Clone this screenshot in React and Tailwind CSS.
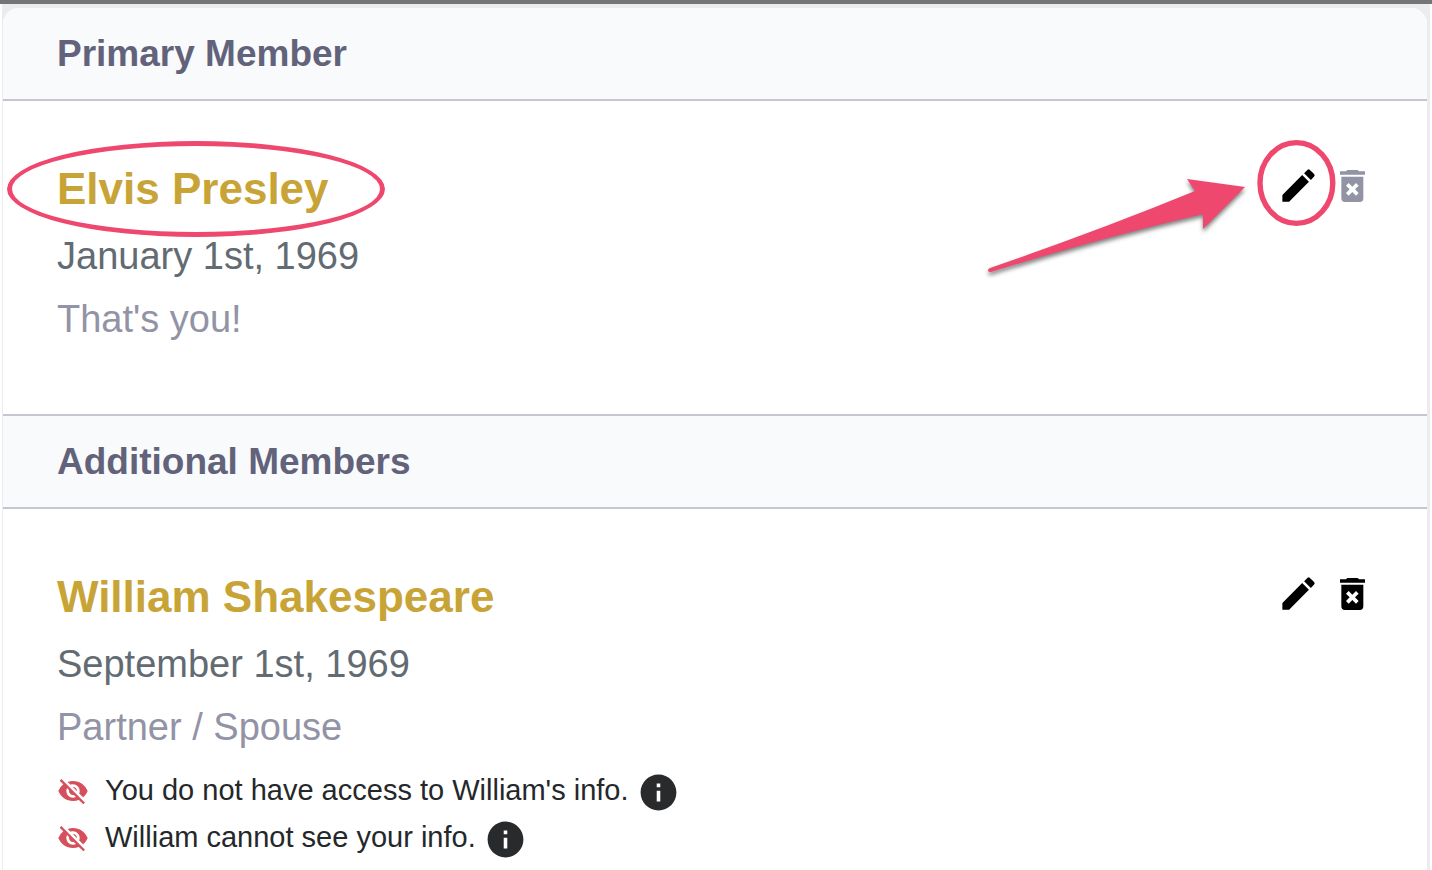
import { MdEdit, MdInfo, MdVisibilityOff } from 'react-icons/md';

const primary = {
  name: 'Elvis Presley',
  birthday: 'January 1st, 1969',
  relation: "That's you!",
};

const additional = {
  name: 'William Shakespeare',
  birthday: 'September 1st, 1969',
  relation: 'Partner / Spouse',
  notes: ["You do not have access to William's info.", 'William cannot see your info.'],
};

function TrashIcon() {
  return (
    <svg viewBox="0 -2 75 99" className="h-[33px] w-[25px]" fill="currentColor" aria-hidden="true">
      <path d="M0 5H18L22 1H53L57 5H75V15H0Z" />
      <path
        fillRule="evenodd"
        d="M4 21H70V86Q70 97 59 97H15Q4 97 4 86ZM26 40L18 48L29 59L18 70L26 78L37 67L48 78L56 70L45 59L56 48L48 40L37 51Z"
      />
    </svg>
  );
}

// Circle and arrow that point at the edit button
function Pointer() {
  return (
    <svg
      viewBox="0 0 355 110"
      className="pointer-events-none absolute -top-5 right-[25px] h-[110px] w-[355px] overflow-visible"
      fill="#ef486f"
      aria-hidden="true"
    >
      <ellipse cx="311.4" cy="48" rx="36.4" ry="40.4" fill="none" stroke="#ef486f" strokeWidth="5.4" />
      <path
        className="drop-shadow-[0px_3px_2px_rgba(0,0,0,0.5)]"
        d="M5 133Q115 95 210 56L202 44L260 52L218 94V79Q115 103 6 137Q3 137 3 135Q3 134 5 133Z"
      />
    </svg>
  );
}

function SectionHeader({ title, className }) {
  return (
    <h2
      className={`border-[#c5c6d2] bg-[#f9fafc] px-[54px] text-[37px] leading-[91px] font-bold text-[#62637a] ${className}`}
    >
      {title}
    </h2>
  );
}

function Member({ member, highlighted, className, children }) {
  return (
    <div className={`flex items-start justify-between pt-[54px] pr-[62px] pl-[54px] ${className}`}>
      <div>
        <div className="relative mb-[2px] w-fit">
          <h3 className="text-[44px] leading-[68px] font-bold text-[#c8a437]">{member.name}</h3>
          {highlighted && (
            <div className="pointer-events-none absolute -top-[14px] -left-[50px] h-[96px] w-[378px] rounded-[50%] border-[5px] border-[#ef486f]" />
          )}
        </div>
        <p className="text-[38px] leading-[63px] text-[#636b72]">{member.birthday}</p>
        <p className="text-[38px] leading-[63px] text-[#9293a5]">{member.relation}</p>
        {children}
      </div>

      <div className="relative flex h-[61px] items-center gap-5">
        <button type="button" aria-label={`Edit ${member.name}`} className="text-black">
          <MdEdit className="size-[43px]" />
        </button>
        <button
          type="button"
          aria-label={`Delete ${member.name}`}
          disabled={highlighted}
          className="text-black disabled:text-[#9293a5]"
        >
          <TrashIcon />
        </button>
        {highlighted && <Pointer />}
      </div>
    </div>
  );
}

export default function App() {
  return (
    <div className="flex min-h-screen flex-col border-t-4 border-[#757575] bg-white px-[2px] font-['Liberation_Sans',Arial,sans-serif]">
      <main className="flex flex-1 flex-col border-t-4 border-r-[3px] border-l border-[#ebecf0] bg-[#ebecf0]">
        <div className="flex-1 overflow-hidden rounded-t-2xl bg-white">
          <section>
            <SectionHeader title="Primary Member" className="border-b-2" />
            <Member member={primary} highlighted className="pb-[63px]" />
          </section>
          <section>
            <SectionHeader title="Additional Members" className="border-y-2" />
            <Member member={additional} className="pb-2">
              <ul className="pt-2">
                {additional.notes.map((note) => (
                  <li key={note} className="flex h-[47px] items-center text-[29px] text-[#25282a]">
                    <MdVisibilityOff className="mr-4 size-8 text-[#d64f5c]" />
                    {note}
                    <button type="button" aria-label="More info" className="ml-2 pt-1 text-[#292a2c]">
                      <MdInfo className="size-[43px]" />
                    </button>
                  </li>
                ))}
              </ul>
            </Member>
          </section>
        </div>
      </main>
    </div>
  );
}
